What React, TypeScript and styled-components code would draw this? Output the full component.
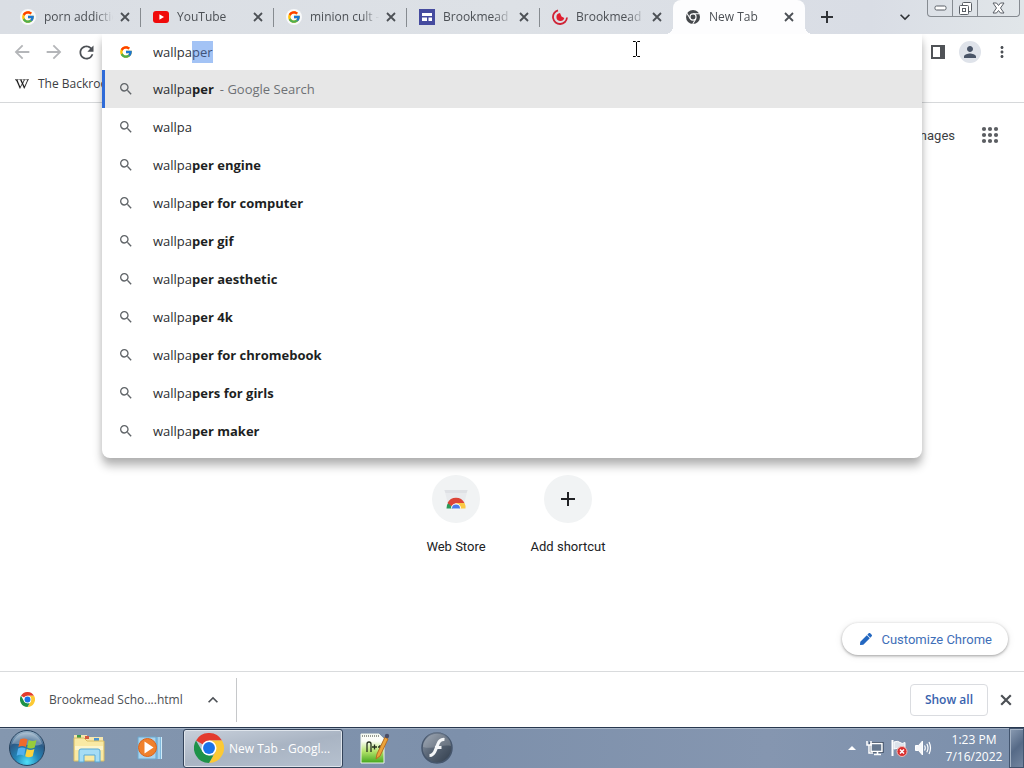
import React, { useEffect, useRef, useState } from "react";
import styled, { createGlobalStyle, css } from "styled-components";
import { FcGoogle } from "react-icons/fc";
import { FaPen, FaWikipediaW } from "react-icons/fa";
import {
  MdAdd,
  MdArrowBack,
  MdArrowForward,
  MdKeyboardArrowDown,
  MdKeyboardArrowUp,
  MdMoreVert,
  MdPerson,
  MdRefresh,
  MdSearch,
} from "react-icons/md";

const ui = `"Segoe UI", "Open Sans", "Noto Sans", sans-serif`;

const GlobalStyle = createGlobalStyle`
  * { box-sizing: border-box; }
  body { margin: 0; background: #fff; color: #202124; font-family: ${ui}; font-size: 13px; }
  button, input { font: inherit; color: inherit; }
  button { border: 0; padding: 0; background: none; }
  svg { display: block; flex: none; }
`;

const Window = styled.div`
  display: flex;
  flex-direction: column;
  min-height: 100vh;
  overflow: hidden;
`;

/* ---------- tab strip ---------- */

const TabStrip = styled.header`
  display: flex;
  height: 34px;
  padding-left: 8px;
  background: linear-gradient(90deg, #dadee4, #dde1e6 50%, #d9dde5 85%, #e1e6e9);
`;

const Tab = styled.div<{ $active?: boolean; $divided?: boolean }>`
  position: relative;
  display: flex;
  align-items: center;
  flex: 0 1 133px;
  min-width: 0;
  height: 34px;
  padding: 0 8px 0 12px;
  color: #4c5055;
  ${(p) =>
    p.$divided &&
    css`
      background: linear-gradient(#868b90, #868b90) right center / 1px 19px no-repeat;
    `}
  ${(p) =>
    p.$active &&
    css`
      flex-basis: 132px;
      background: #fdfdfe;
      border-radius: 8px 8px 0 0;
      &::before,
      &::after {
        content: "";
        position: absolute;
        bottom: 0;
        width: 8px;
        height: 8px;
      }
      &::before {
        left: -8px;
        background: radial-gradient(circle at 0 0, transparent 8px, #fdfdfe 8px);
      }
      &::after {
        right: -8px;
        background: radial-gradient(circle at 100% 0, transparent 8px, #fdfdfe 8px);
      }
    `}
`;

const Favicon = styled.span<{ $round?: boolean }>`
  display: flex;
  align-items: center;
  justify-content: center;
  flex: none;
  width: 16px;
  height: 16px;
  border-radius: 8px;
  background: ${(p) => (p.$round ? "#f8f9fa" : "none")};
`;

const TabTitle = styled.span`
  flex: 1;
  min-width: 0;
  margin-left: 8px;
  overflow: hidden;
  white-space: nowrap;
  font-size: 12px;
  line-height: 18px;
  mask-image: linear-gradient(90deg, #000 70%, transparent 95%);
`;

const IconButton = styled.button<{ $size: number; $color?: string }>`
  display: flex;
  align-items: center;
  justify-content: center;
  flex: none;
  width: ${(p) => p.$size}px;
  height: ${(p) => p.$size}px;
  border-radius: 50%;
  color: ${(p) => p.$color ?? "#4c5055"};
`;

const StripEnd = styled.div`
  display: flex;
  flex: 1;
  align-items: center;
  padding: 0 4px 0 8px;
`;

const TabSearch = styled(IconButton)`
  margin-left: auto;
`;

const WindowControls = styled.div`
  display: flex;
  align-self: flex-start;
  height: 17px;
  margin-left: 8px;
  border: 1px solid #868b91;
  border-top: 0;
  border-radius: 0 0 4px 4px;
`;

const WindowButton = styled.button<{ $w: number }>`
  display: flex;
  align-items: center;
  justify-content: center;
  width: ${(p) => p.$w}px;
  height: 16px;
  & + & {
    border-left: 1px solid #868b91;
  }
`;

/* ---------- toolbar ---------- */

const Chrome = styled.div`
  display: grid;
  grid-template-columns: 102px minmax(0, 1fr) 102px;
  grid-template-rows: 36px 32px;
  border-bottom: 1px solid #d6d8da;
`;

const NavButtons = styled.nav`
  display: flex;
  align-items: center;
  gap: 10px;
  padding-left: 11px;
`;

const ToolbarActions = styled.div`
  display: flex;
  align-items: center;
  gap: 10px;
  padding-left: 5px;
`;

const Avatar = styled(IconButton)`
  background: #dfe3ea;
`;

const OmniboxSlot = styled.div`
  position: relative;
  z-index: 2;
`;

const Omnibox = styled.div`
  position: absolute;
  top: 0;
  left: 0;
  right: 0;
  padding-bottom: 8px;
  background: #fff;
  border-radius: 0 0 8px 8px;
  box-shadow: 0 8px 10px rgba(0, 0, 0, 0.27), 0 2px 6px rgba(0, 0, 0, 0.08);
  clip-path: inset(0 -24px -24px -24px);
`;

const SearchRow = styled.label`
  display: flex;
  align-items: center;
  height: 36px;
  padding-left: 17px;
`;

const SearchInput = styled.input`
  flex: 1;
  min-width: 0;
  height: 22px;
  margin-left: 20px;
  padding: 0;
  border: 0;
  outline: 0;
  background: none;
  line-height: 22px;
  color: #303236;
  caret-color: transparent;
  &::selection {
    background: #a3c3f5;
    color: #40547a;
  }
`;

const Suggestions = styled.ul`
  margin: 0;
  padding: 0;
  list-style: none;
`;

const Suggestion = styled.li<{ $selected?: boolean }>`
  display: flex;
  align-items: center;
  height: 38px;
  padding-left: 13px;
  border-left: 3px solid ${(p) => (p.$selected ? "#2f6bd8" : "transparent")};
  background: ${(p) => (p.$selected ? "#e7e7e7" : "none")};
  color: #606468;
  white-space: pre;
`;

const SuggestionText = styled.span`
  margin-left: 19px;
  color: #2b2d31;
  line-height: 18px;
  b {
    font-weight: 700;
    color: #1d1f23;
  }
`;

const Hint = styled.span`
  margin-left: 6px;
  color: #6e7175;
`;

const Bookmarks = styled.div`
  display: flex;
  align-items: center;
  grid-column: 1 / -1;
  padding: 0 0 4px 15px;
`;

const Bookmark = styled.a`
  display: flex;
  align-items: center;
  gap: 9px;
  color: #3c4043;
  font-size: 12px;
  line-height: 18px;
  text-decoration: none;
  svg {
    color: #111;
    stroke: #111;
    stroke-width: 8px;
  }
`;

/* ---------- new tab page ---------- */

const Page = styled.main`
  display: flex;
  flex: 1;
  flex-direction: column;
  font-family: Roboto, sans-serif;
`;

const PageHeader = styled.div`
  display: flex;
  align-items: center;
  justify-content: flex-end;
  gap: 23px;
  height: 64px;
  padding-right: 22px;
`;

const PageLink = styled.a`
  color: #3c3e42;
  text-decoration: none;
`;

const Shortcuts = styled.div`
  display: flex;
  justify-content: center;
  margin-top: 308px;
`;

const Shortcut = styled.button`
  display: flex;
  flex-direction: column;
  align-items: center;
  gap: 16px;
  width: 112px;
  line-height: 16px;
`;

const ShortcutIcon = styled.span`
  display: flex;
  align-items: center;
  justify-content: center;
  width: 48px;
  height: 48px;
  border-radius: 50%;
  background: #f1f3f4;
`;

const Customize = styled.button`
  display: flex;
  align-items: center;
  align-self: flex-end;
  gap: 9px;
  height: 32px;
  margin: auto 16px 16px 0;
  padding: 0 16px 0 18px;
  border-radius: 16px;
  background: #fff;
  box-shadow: 0 1px 3px rgba(0, 0, 0, 0.35), 0 1px 8px rgba(0, 0, 0, 0.08);
  color: #3f6fb8;
  svg {
    color: #2367c0;
  }
`;

/* ---------- download shelf ---------- */

const Shelf = styled.section`
  display: flex;
  align-items: center;
  height: 56px;
  padding-right: 8px;
  border-top: 1px solid #d9dbdd;
`;

const Download = styled.div`
  display: flex;
  align-items: center;
  width: 237px;
  height: 44px;
  padding: 0 13px 0 20px;
  border-right: 1px solid #c6c8ca;
  color: #4b4e52;
`;

const FileName = styled.span`
  flex: 1;
  margin-left: 14px;
  font-size: 12px;
  line-height: 18px;
`;

const ShowAll = styled.button`
  height: 32px;
  margin: 0 8px 0 auto;
  padding: 0 14px;
  border: 1px solid #dadce0;
  border-radius: 4px;
  color: #3963ae;
  font-size: 12px;
  font-weight: 600;
`;

/* ---------- taskbar ---------- */

const Taskbar = styled.footer`
  display: flex;
  align-items: center;
  height: 41px;
  border-top: 1px solid #28384f;
  box-shadow: inset 0 1px 0 #a7b5c7;
  background: linear-gradient(90deg, #8497af, #7d90ab 45%, #8596b0 75%, #7b8fab);
  color: #fff;
  font-size: 12px;
`;

const Pinned = styled.button<{ $w: number }>`
  display: flex;
  align-items: center;
  justify-content: center;
  width: ${(p) => p.$w}px;
  height: 40px;
`;

const TaskButton = styled.button`
  display: flex;
  align-items: center;
  gap: 5px;
  width: 160px;
  height: 39px;
  margin-left: 6px;
  padding-left: 10px;
  border: 1px solid #33435a;
  border-radius: 3px;
  box-shadow: inset 0 0 0 1px #dfe5ec;
  background: linear-gradient(170deg, #c8d0db, #a9b4c3 50%, #b6c1cf);
  color: #fff;
`;

const Tray = styled.div`
  display: flex;
  align-items: center;
  margin-left: auto;
`;

const TrayIcons = styled.div`
  display: flex;
  align-items: center;
  gap: 6px;
`;

const TrayButton = styled.button`
  display: flex;
`;

const Clock = styled.time`
  width: 70px;
  margin-left: 7px;
  line-height: 17px;
  text-align: center;
`;

const ShowDesktop = styled.button`
  width: 15px;
  height: 40px;
  border: 1px solid #42546e;
  background: linear-gradient(135deg, #8b9cb3, #566a87 50%, #73859f);
  box-shadow: inset 1px 1px 0 #a5b3c5;
`;

const Pointer = styled.svg`
  position: absolute;
  top: 7px;
  left: 530px;
`;

/* ---------- drawings ---------- */

const CrossIcon = ({ size }: { size: number }) => (
  <svg width={size} height={size} viewBox="0 0 10 10" aria-hidden>
    <path d="m1 1 8 8M9 1 1 9" stroke="currentColor" strokeWidth="1.800" />
  </svg>
);

const PlusIcon = () => (
  <svg width="12" height="12" viewBox="0 0 12 12" aria-hidden>
    <path d="M6 0v12M0 6h12" stroke="currentColor" strokeWidth="2" />
  </svg>
);

const ChromeLogo = ({ size }: { size: number }) => (
  <svg width={size} height={size} viewBox="0 0 48 48" aria-hidden>
    <path d="M24 24 3.2 12A24 24 0 0 1 44.8 12H24Z" fill="#e33b2e" />
    <path d="M24 12h20.8A24 24 0 0 1 24 48l10.4-18Z" fill="#fcc934" />
    <path d="M3.2 12 13.6 30 24 36h6.900L24 48A24 24 0 0 1 3.200 12Z" fill="#1e9248" />
    <circle cx="24" cy="24" r="12" fill="#fff" />
    <circle cx="24" cy="24" r="9.500" fill="#1a73e8" />
  </svg>
);

const ChromeMono = () => (
  <svg width="14" height="14" viewBox="0 0 48 48" aria-hidden>
    <circle cx="24" cy="24" r="24" fill="#45484c" />
    <circle cx="24" cy="24" r="12.500" fill="#fdfdfe" />
    <path d="M24 12.500h22M14 29.500 3 11M34 30 23 48" stroke="#fdfdfe" strokeWidth="3.500" />
    <circle cx="24" cy="24" r="8.500" fill="#45484c" />
  </svg>
);

const YouTubeIcon = () => (
  <svg width="16" height="12" viewBox="0 0 16 12" aria-hidden>
    <rect width="16" height="12" rx="3" fill="#f00a0a" />
    <path d="M6.400 3.300v5.400L11 6Z" fill="#fff" />
  </svg>
);

const SitesIcon = () => (
  <svg width="16" height="16" viewBox="0 0 16 16" aria-hidden>
    <rect width="16" height="16" fill="#454b9f" />
    <path d="M3 4h10v3H3ZM3 8.500h5V12H3ZM9.500 8.500H13V12H9.500Z" fill="#fff" />
  </svg>
);

const SchoolIcon = () => (
  <svg width="16" height="16" viewBox="0 0 16 16" aria-hidden>
    <path d="M6 1.300A7 7 0 1 0 15 8.500" fill="none" stroke="#cf2336" strokeWidth="1.800" />
    <path d="M8 4A4 4 0 1 0 12.300 9L9.500 7.500Z" fill="#e01e2f" />
  </svg>
);

const SidePanelIcon = () => (
  <svg width="14" height="14" viewBox="0 0 14 14" aria-hidden>
    <path d="M1 1h12v12H1Z" fill="none" stroke="#505357" strokeWidth="2" />
    <path d="M9 1h4v12H9Z" fill="#505357" />
  </svg>
);

const AppsIcon = () => (
  <svg width="24" height="24" viewBox="0 0 24 24" fill="#5b5e62" aria-hidden>
    {[6, 12, 18].map((y) => [6, 12, 18].map((x) => <circle key={`${x}-${y}`} cx={x} cy={y} r="2.100" />))}
  </svg>
);

const WebStoreIcon = () => (
  <svg width="24" height="24" viewBox="0 0 24 24" aria-hidden>
    <path d="M.5 3h23L20 17H4Z" fill="#e8eaed" />
    <path d="M.5 3h23l-1 3h-21Z" fill="#dfe1e5" />
    <path d="M2.500 21.500a9.500 9.500 0 0 1 2.200-6.500L9 21.500Z" fill="#2b9a58" />
    <path d="M3.500 16a9.500 9.500 0 0 1 17 0H12l-4 3.500Z" fill="#dc4437" />
    <path d="M12 16h8.500a9.500 9.500 0 0 1 1 5.500H15Z" fill="#fbc843" />
    <path d="M7 21.500a5 5 0 0 1 10 0Z" fill="#fff" />
    <path d="M8 21.500a4 4 0 0 1 8 0Z" fill="#4a7bea" />
  </svg>
);

const MinimizeIcon = () => (
  <svg width="13" height="6" viewBox="0 0 13 6" aria-hidden>
    <rect x="1" y="1" width="11" height="4" rx="1.500" fill="#fff" stroke="#5a5f66" />
  </svg>
);

const RestoreIcon = () => (
  <svg width="13" height="13" viewBox="0 0 13 13" fill="#fff" stroke="#5a5f66" aria-hidden>
    <rect x="3.500" y=".5" width="9" height="9" rx="1" />
    <rect x=".5" y="3.500" width="9" height="9" rx="1" />
    <rect x="3.500" y="6.500" width="3" height="3" />
  </svg>
);

const CloseWindowIcon = () => (
  <svg width="13" height="12" viewBox="0 0 13 12" aria-hidden>
    <path
      d="M1 1h3.500l2 2.500L8.500 1H12L8.500 6 12 11H8.500l-2-2.500L4.500 11H1l3.500-5Z"
      fill="#fff"
      stroke="#5a5f66"
    />
  </svg>
);

const StartOrb = () => (
  <svg width="38" height="38" viewBox="0 0 38 38" aria-hidden>
    <defs>
      <radialGradient id="orb" cx=".5" cy=".9" r=".85">
        <stop offset="0" stopColor="#4fe0f8" />
        <stop offset=".4" stopColor="#2385b8" />
        <stop offset=".75" stopColor="#2c5a86" />
        <stop offset="1" stopColor="#8fabc2" />
      </radialGradient>
    </defs>
    <circle cx="19" cy="19" r="17.500" fill="url(#orb)" stroke="#27435f" />
    <path d="M4 15a15.500 15.500 0 0 1 30 0c-7 4-20-1-30 0Z" fill="#fff" opacity=".3" />
    <path d="M12 10.500q4-2.200 7.500 0l-1.600 7.500q-3.500-2-7.500 0Z" fill="#ef6a2c" />
    <path d="M20.700 11q3.800 2 7.800 0l-1.800 7.500q-4 2-7.600 0Z" fill="#98cc3c" />
    <path d="M10.100 19.500q4-2 7.500 0l-1.700 7.300q-3.500-2-7.300 0Z" fill="#53b0ee" />
    <path d="M18.800 20q3.600 2 7.600 0l-1.700 7.200q-4 2-7.500 0Z" fill="#fcd23d" />
  </svg>
);

const ExplorerIcon = () => (
  <svg width="34" height="32" viewBox="0 0 34 32" aria-hidden>
    <path d="M3 3h9l2 2h17v24H3Z" fill="#e6c971" />
    <path d="M2 3h13v5H2ZM15 5h16v5H15Z" fill="#f6e7ae" />
    <path d="M5 3h4v3H5Z" fill="#3c9a48" />
    <path d="M13 4h4v3h-4Z" fill="#d55a3f" />
    <path d="M22 6h5v3h-5Z" fill="#4b93cf" />
    <path d="M2 6h10l3 3h17v20H2Z" fill="#f9e9a4" stroke="#d9bd62" />
    <path d="M3 14h28v4H3Z" fill="#fdf5cb" />
    <path d="M7 30V19q0-2 2-2h17q2 0 2 2v11h-5v-7H12v7Z" fill="#a5dcf5" stroke="#58a9d5" />
  </svg>
);

const MediaPlayerIcon = () => (
  <svg width="26" height="26" viewBox="0 0 26 26" aria-hidden>
    <path d="M10 2h15v22H10Z" fill="#7fb9dd" />
    <path d="M22 2v22M24.500 2v22" stroke="#cfeaf8" />
    <path d="M1 2h18v22H1Z" fill="#a9d4ee" stroke="#6ba6cd" />
    <circle cx="10.500" cy="12.500" r="9" fill="#f0812c" stroke="#d9621a" />
    <path d="M7.500 6.500v12l9-6Z" fill="#fff" />
  </svg>
);

const NotepadIcon = () => (
  <svg width="30" height="32" viewBox="0 0 30 32" aria-hidden>
    <defs>
      <linearGradient id="pad" x1="0" y1="0" x2="0" y2="1">
        <stop offset=".25" stopColor="#fbfdf8" />
        <stop offset=".6" stopColor="#b4e36a" />
        <stop offset="1" stopColor="#42a51c" />
      </linearGradient>
    </defs>
    <path d="M1 2h18l5 5v24H1Z" fill="url(#pad)" stroke="#eff5ea" />
    <path d="M2 4h17" stroke="#969c91" strokeDasharray="1 1" strokeWidth="2" />
    <path d="M7 20v-8q0-2 2-2t2 2v8M12 15h5M14.500 12.500v5M18 15h4M20 13v4" fill="none" stroke="#26301f" strokeWidth="1.300" />
    <path d="m25 5 3 2-8 17-4 3 1-5Z" fill="#eba43a" stroke="#b66e25" />
    <circle cx="27" cy="4" r="2.200" fill="#4b4e66" />
  </svg>
);

const FlashIcon = () => (
  <svg width="34" height="34" viewBox="0 0 34 34" aria-hidden>
    <defs>
      <linearGradient id="flash" x1="0" y1="0" x2="1" y2="1">
        <stop offset="0" stopColor="#8e9aaa" />
        <stop offset=".45" stopColor="#5a6676" />
        <stop offset="1" stopColor="#303c4b" />
      </linearGradient>
    </defs>
    <circle cx="17" cy="17" r="15" fill="url(#flash)" stroke="#46566c" strokeWidth="1.500" />
    <path d="M3 16a14 14 0 0 1 28-1c-9-2-18 4-28 1Z" fill="#fff" opacity=".18" />
    <path
      d="M24.500 8.500q-5-.5-7 5.500l-2 5q-2 5.500-6 5.500M15 16.500h6.500"
      fill="none"
      stroke="#f4f6f8"
      strokeWidth="3.200"
    />
  </svg>
);

const NetworkIcon = () => (
  <svg width="18" height="18" viewBox="0 0 18 18" aria-hidden>
    <path d="M5 4.500h11v8H5Z" fill="#66788f" stroke="#26364c" strokeWidth="3" />
    <path d="M5 4.500h11v8H5Z" fill="#66788f" stroke="#fff" strokeWidth="1.500" />
    <path d="M8 15.500h7M11.500 12.500v3" stroke="#fff" strokeWidth="1.600" />
    <path d="M1 2v4h4V2M3 6v8h4" fill="none" stroke="#fff" strokeWidth="1.500" />
  </svg>
);

const FlagIcon = () => (
  <svg width="18" height="18" viewBox="0 0 18 18" aria-hidden>
    <path d="M2.500 1v16" stroke="#fff" strokeWidth="2" />
    <path d="M4 3q4-1.500 6 .5t5 0v7q-3 1-5-.5T4 10Z" fill="#dce3eb" stroke="#fff" />
    <circle cx="12" cy="12.500" r="5" fill="#d92f2f" stroke="#f3b9b4" />
    <path d="m10 10.500 4 4m0-4-4 4" stroke="#fff" strokeWidth="1.500" />
  </svg>
);

const SpeakerIcon = () => (
  <svg width="18" height="18" viewBox="0 0 18 18" aria-hidden>
    <path d="M1.500 6.500h3l4-4.500v14l-4-4.500h-3Z" fill="#f5f7fa" stroke="#fff" />
    <path
      d="M10.500 6.500q1.500 2.500 0 5M12.800 4.800q2.400 4.200 0 8.400M15 3q3 6 0 12"
      fill="none"
      stroke="#fff"
      strokeWidth="1.200"
    />
  </svg>
);

/* ---------- data ---------- */

const tabs = [
  { title: "porn addiction", icon: <FcGoogle size={14} />, round: true },
  { title: "YouTube", icon: <YouTubeIcon /> },
  { title: "minion cult - Google", icon: <FcGoogle size={14} />, round: true },
  { title: "Brookmead School", icon: <SitesIcon /> },
  { title: "Brookmead School", icon: <SchoolIcon /> },
  { title: "New Tab", icon: <ChromeMono /> },
];

const suggestions = [
  { rest: "per", hint: "- Google Search" },
  { rest: "" },
  { rest: "per engine" },
  { rest: "per for computer" },
  { rest: "per gif" },
  { rest: "per aesthetic" },
  { rest: "per 4k" },
  { rest: "per for chromebook" },
  { rest: "pers for girls" },
  { rest: "per maker" },
];

export default function App() {
  const [query, setQuery] = useState("wallpaper");
  const input = useRef<HTMLInputElement>(null);

  useEffect(() => {
    input.current?.focus();
    input.current?.setSelectionRange(6, 9);
  }, []);

  return (
    <Window>
      <GlobalStyle />
      <TabStrip>
        {tabs.map((tab, i) => (
          <Tab key={i} $active={i === 5} $divided={i < 4}>
            <Favicon $round={tab.round}>{tab.icon}</Favicon>
            <TabTitle>{tab.title}</TabTitle>
            <IconButton $size={16} aria-label="Close tab">
              <CrossIcon size={10} />
            </IconButton>
          </Tab>
        ))}
        <StripEnd>
          <IconButton $size={28} $color="#303337" aria-label="New tab">
            <PlusIcon />
          </IconButton>
          <TabSearch $size={28} $color="#303337" aria-label="Search tabs">
            <MdKeyboardArrowDown size={20} />
          </TabSearch>
          <WindowControls>
            <WindowButton $w={24} aria-label="Minimize">
              <MinimizeIcon />
            </WindowButton>
            <WindowButton $w={25} aria-label="Restore">
              <RestoreIcon />
            </WindowButton>
            <WindowButton $w={42} aria-label="Close">
              <CloseWindowIcon />
            </WindowButton>
          </WindowControls>
        </StripEnd>
      </TabStrip>

      <Chrome>
        <NavButtons>
          <IconButton $size={22} $color="#b4b6b9" aria-label="Back">
            <MdArrowBack size={22} />
          </IconButton>
          <IconButton $size={22} $color="#b4b6b9" aria-label="Forward">
            <MdArrowForward size={22} />
          </IconButton>
          <IconButton $size={22} aria-label="Reload">
            <MdRefresh size={21} />
          </IconButton>
        </NavButtons>
        <OmniboxSlot>
          <Omnibox>
            <SearchRow aria-label="Search or type a URL">
              <FcGoogle size={14} />
              <SearchInput ref={input} value={query} onChange={(e) => setQuery(e.target.value)} />
            </SearchRow>
            <Suggestions>
              {suggestions.map((s, i) => (
                <Suggestion key={i} $selected={i === 0}>
                  <MdSearch size={16} />
                  <SuggestionText>
                    wallpa<b>{s.rest}</b>
                    {s.hint && <Hint>{s.hint}</Hint>}
                  </SuggestionText>
                </Suggestion>
              ))}
            </Suggestions>
            <Pointer width="9" height="17" viewBox="0 0 9 17" aria-hidden>
              <path d="M1 .5h2.500l1 1 1-1H8M1 15.500h2.500l1-1 1 1H8M4.500 1v14" fill="none" stroke="#000" />
            </Pointer>
          </Omnibox>
        </OmniboxSlot>
        <ToolbarActions>
          <IconButton $size={22} aria-label="Side panel">
            <SidePanelIcon />
          </IconButton>
          <Avatar $size={22} $color="#4a5568" aria-label="Profile">
            <MdPerson size={18} />
          </Avatar>
          <IconButton $size={22} aria-label="Menu">
            <MdMoreVert size={18} />
          </IconButton>
        </ToolbarActions>
        <Bookmarks>
          <Bookmark href="#">
            <FaWikipediaW size={14} />
            The Backrooms
          </Bookmark>
        </Bookmarks>
      </Chrome>

      <Page>
        <PageHeader>
          <PageLink href="#">Images</PageLink>
          <IconButton $size={24} aria-label="Google apps">
            <AppsIcon />
          </IconButton>
        </PageHeader>
        <Shortcuts>
          <Shortcut>
            <ShortcutIcon>
              <WebStoreIcon />
            </ShortcutIcon>
            Web Store
          </Shortcut>
          <Shortcut>
            <ShortcutIcon>
              <MdAdd size={24} />
            </ShortcutIcon>
            Add shortcut
          </Shortcut>
        </Shortcuts>
        <Customize>
          <FaPen size={12} />
          Customize Chrome
        </Customize>
      </Page>

      <Shelf>
        <Download>
          <ChromeLogo size={15} />
          <FileName>Brookmead Scho....html</FileName>
          <IconButton $size={20} aria-label="Download options">
            <MdKeyboardArrowUp size={20} />
          </IconButton>
        </Download>
        <ShowAll>Show all</ShowAll>
        <IconButton $size={20} aria-label="Close downloads">
          <CrossIcon size={12} />
        </IconButton>
      </Shelf>

      <Taskbar>
        <Pinned $w={54} aria-label="Start">
          <StartOrb />
        </Pinned>
        <Pinned $w={69} aria-label="Explorer">
          <ExplorerIcon />
        </Pinned>
        <Pinned $w={54} aria-label="Media player">
          <MediaPlayerIcon />
        </Pinned>
        <TaskButton>
          <ChromeLogo size={30} />
          New Tab - Googl...
        </TaskButton>
        <Pinned $w={63} aria-label="Notepad">
          <NotepadIcon />
        </Pinned>
        <Pinned $w={62} aria-label="Flash">
          <FlashIcon />
        </Pinned>
        <Tray>
          <TrayIcons>
            <TrayButton aria-label="Hidden icons">
              <svg width="16" height="8" viewBox="0 0 16 8" aria-hidden>
                <path d="m4 6 4-4 4 4Z" fill="#fff" />
              </svg>
            </TrayButton>
            <TrayButton aria-label="Network">
              <NetworkIcon />
            </TrayButton>
            <TrayButton aria-label="Action center">
              <FlagIcon />
            </TrayButton>
            <TrayButton aria-label="Volume">
              <SpeakerIcon />
            </TrayButton>
          </TrayIcons>
          <Clock>
            1:23 PM
            <br />
            7/16/2022
          </Clock>
          <ShowDesktop aria-label="Show desktop" />
        </Tray>
      </Taskbar>
    </Window>
  );
}
